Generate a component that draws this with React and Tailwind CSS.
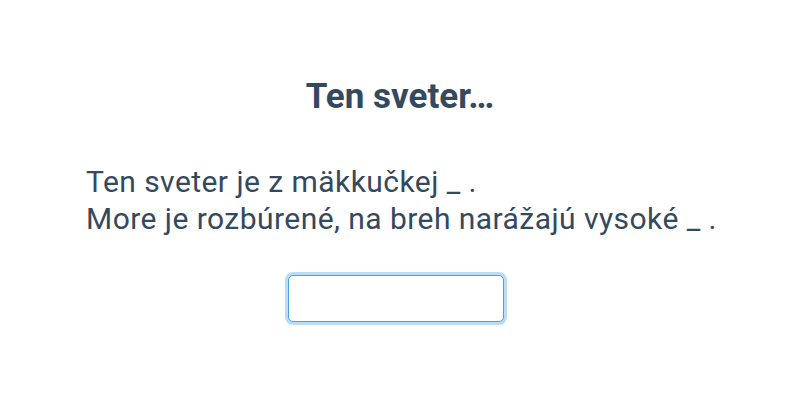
export default function App() {
  return (
    <div className="w-[800px] h-[400px] bg-white text-[#2c3e50]" style={{ fontFamily: "Roboto, sans-serif" }}>
      <div className="pt-[72px] flex flex-col items-center">
        <h1 className="text-[35px] font-bold leading-[50px] text-[#34495e]">Ten sveter…</h1>
      </div>
      <div className="pl-[86px] pt-[41px] text-[30px] leading-[37px] tracking-[0.45px] whitespace-nowrap text-[#34495e]">
        <div>Ten sveter je z mäkkučkej _ .</div>
        <div>More je rozbúrené, na breh narážajú vysoké _ .</div>
      </div>
      <div className="flex justify-center pt-[38px] pr-[8px]">
        <input
          type="text"
          className="w-[216px] h-[47px] rounded-[5px] border border-[#4aa3df] outline-none ring-[3px] ring-[#b9ddf6] bg-white"
        />
      </div>
    </div>
  );
}
